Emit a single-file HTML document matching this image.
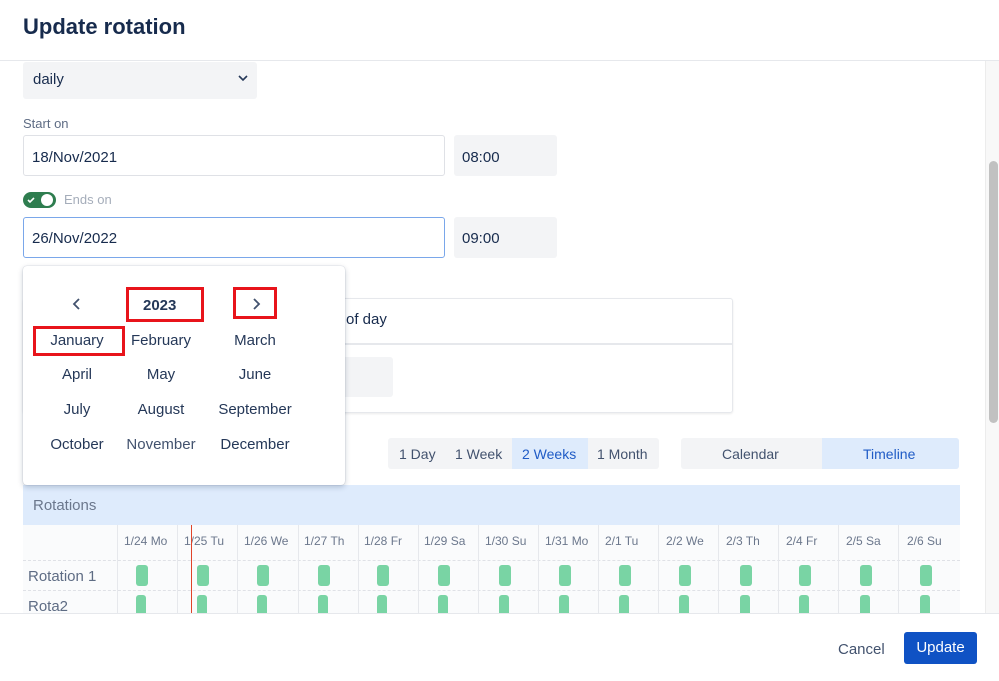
<!DOCTYPE html>
<html><head><meta charset="utf-8"><style>
*{box-sizing:border-box;margin:0;padding:0}
body{width:999px;height:681px;overflow:hidden;background:#fff;font-family:"Liberation Sans",sans-serif;color:#172b4d;position:relative}
.a{position:absolute}
.t{font-size:15px}
.hdr{font-size:12px;color:#6b778c}
.col{position:absolute;top:525px;height:88px;border-left:1.5px solid #e6e8ec}
.b1{position:absolute;top:565px;width:12px;height:21px;background:#79d4a4;border-radius:3px}
.b2{position:absolute;top:595px;width:10px;height:18px;background:#79d4a4;border-radius:3px 3px 0 0}
.m{position:absolute;font-size:15px;color:#253858;text-align:center;width:90px}
.red{position:absolute;border:3px solid #e8141b}
</style></head><body>
<div class="a" style="left:23px;top:14px;font-size:22px;font-weight:bold;color:#172b4d">Update rotation</div>
<div class="a" style="left:0;top:60px;width:999px;height:1px;background:#e6e8ec"></div>

<div class="a" style="left:23px;top:62px;width:234px;height:37px;background:#f3f4f6;border-radius:3px"></div>
<div class="a t" style="left:33px;top:71px">daily</div>
<svg class="a" style="left:237px;top:73px" width="12" height="10"><path d="M2 3l4 4 4-4" stroke="#253858" stroke-width="1.6" fill="none"/></svg>

<div class="a" style="left:23px;top:116px;font-size:13px;color:#5e6c84">Start on</div>
<div class="a" style="left:23px;top:135px;width:422px;height:41px;border:1.5px solid #dfe1e6;border-radius:3px"></div>
<div class="a t" style="left:32px;top:149px">18/Nov/2021</div>
<div class="a" style="left:454px;top:135px;width:103px;height:41px;background:#f3f4f6;border-radius:3px"></div>
<div class="a t" style="left:462px;top:149px">08:00</div>

<div class="a" style="left:23px;top:192px;width:33px;height:16px;background:#2e7d4f;border-radius:8px"></div>
<div class="a" style="left:41px;top:194px;width:12px;height:12px;background:#fff;border-radius:6px"></div>
<svg class="a" style="left:26px;top:195px" width="10" height="10"><path d="M2 5l2 2 4-4" stroke="#fff" stroke-width="1.6" fill="none"/></svg>
<div class="a" style="left:64px;top:192px;font-size:13px;color:#a5adba">Ends on</div>
<div class="a" style="left:23px;top:217px;width:422px;height:41px;border:1.5px solid #7aa7ea;border-radius:3px"></div>
<div class="a t" style="left:32px;top:230px">26/Nov/2022</div>
<div class="a" style="left:454px;top:217px;width:103px;height:41px;background:#f3f4f6;border-radius:3px"></div>
<div class="a t" style="left:462px;top:230px">09:00</div>

<div class="a" style="left:23px;top:298px;width:710px;height:115px;border:1.5px solid #e6e8ec;border-radius:3px;box-shadow:0 1px 2px rgba(0,0,0,.08)"></div>
<div class="a" style="left:23px;top:343px;width:710px;height:1.5px;background:#e6e8ec"></div>
<div class="a t" style="left:346px;top:311px">of day</div>
<div class="a" style="left:300px;top:357px;width:93px;height:40px;background:#f3f4f6;border-radius:3px"></div>

<div class="a" style="left:388px;top:438px;width:271px;height:31px;background:#f3f4f6;border-radius:3px"></div>
<div class="a" style="left:512px;top:438px;width:76px;height:31px;background:#deebfc"></div>
<div class="a" style="left:399px;top:446px;font-size:14px;color:#42526e">1 Day</div>
<div class="a" style="left:455px;top:446px;font-size:14px;color:#42526e">1 Week</div>
<div class="a" style="left:522px;top:446px;font-size:14px;color:#1f5bc6">2 Weeks</div>
<div class="a" style="left:597px;top:446px;font-size:14px;color:#42526e">1 Month</div>
<div class="a" style="left:681px;top:438px;width:278px;height:31px;background:#f3f4f6;border-radius:3px"></div>
<div class="a" style="left:822px;top:438px;width:137px;height:31px;background:#deebfc;border-radius:0 3px 3px 0"></div>
<div class="a" style="left:722px;top:446px;font-size:14px;color:#42526e">Calendar</div>
<div class="a" style="left:863px;top:446px;font-size:14px;color:#1f5bc6">Timeline</div>

<div class="a" style="left:23px;top:485px;width:937px;height:40px;background:#deebfc"></div>
<div class="a" style="left:33px;top:497px;font-size:15px;color:#6b778c">Rotations</div>
<div class="a" style="left:23px;top:525px;width:937px;height:88px;background:#fafbfc"></div>
<div class="a" style="left:23px;top:560px;width:937px;border-top:1px dashed #dfe1e6"></div>
<div class="a" style="left:23px;top:590px;width:937px;border-top:1px dashed #dfe1e6"></div>
<div class="a" style="left:28px;top:568px;font-size:15px;color:#5e6c84">Rotation 1</div>
<div class="a" style="left:28px;top:598px;font-size:15px;color:#5e6c84">Rota2</div>

<div class="col" style="left:117px"></div><div class="a hdr" style="left:124px;top:534px">1/24 Mo</div><div class="b1" style="left:136px"></div><div class="b2" style="left:136px"></div>
<div class="col" style="left:177px"></div><div class="a hdr" style="left:184px;top:534px">1/25 Tu</div><div class="b1" style="left:197px"></div><div class="b2" style="left:197px"></div>
<div class="col" style="left:237px"></div><div class="a hdr" style="left:244px;top:534px">1/26 We</div><div class="b1" style="left:257px"></div><div class="b2" style="left:257px"></div>
<div class="col" style="left:298px"></div><div class="a hdr" style="left:304px;top:534px">1/27 Th</div><div class="b1" style="left:318px"></div><div class="b2" style="left:318px"></div>
<div class="col" style="left:358px"></div><div class="a hdr" style="left:364px;top:534px">1/28 Fr</div><div class="b1" style="left:377px"></div><div class="b2" style="left:377px"></div>
<div class="col" style="left:418px"></div><div class="a hdr" style="left:424px;top:534px">1/29 Sa</div><div class="b1" style="left:438px"></div><div class="b2" style="left:438px"></div>
<div class="col" style="left:478px"></div><div class="a hdr" style="left:485px;top:534px">1/30 Su</div><div class="b1" style="left:499px"></div><div class="b2" style="left:499px"></div>
<div class="col" style="left:538px"></div><div class="a hdr" style="left:545px;top:534px">1/31 Mo</div><div class="b1" style="left:559px"></div><div class="b2" style="left:559px"></div>
<div class="col" style="left:598px"></div><div class="a hdr" style="left:605px;top:534px">2/1 Tu</div><div class="b1" style="left:619px"></div><div class="b2" style="left:619px"></div>
<div class="col" style="left:658px"></div><div class="a hdr" style="left:666px;top:534px">2/2 We</div><div class="b1" style="left:679px"></div><div class="b2" style="left:679px"></div>
<div class="col" style="left:718px"></div><div class="a hdr" style="left:726px;top:534px">2/3 Th</div><div class="b1" style="left:740px"></div><div class="b2" style="left:740px"></div>
<div class="col" style="left:778px"></div><div class="a hdr" style="left:786px;top:534px">2/4 Fr</div><div class="b1" style="left:799px"></div><div class="b2" style="left:799px"></div>
<div class="col" style="left:838px"></div><div class="a hdr" style="left:846px;top:534px">2/5 Sa</div><div class="b1" style="left:860px"></div><div class="b2" style="left:860px"></div>
<div class="col" style="left:898px"></div><div class="a hdr" style="left:907px;top:534px">2/6 Su</div><div class="b1" style="left:920px"></div><div class="b2" style="left:920px"></div>
<div class="a" style="left:190.5px;top:525px;width:1.5px;height:88px;background:#e0442a"></div>

<div class="a" style="left:23px;top:266px;width:322px;height:219px;background:#fff;border-radius:4px;box-shadow:0 2px 6px rgba(9,30,66,.22),0 0 1px rgba(9,30,66,.3)"></div>
<svg class="a" style="left:71px;top:297px" width="12" height="14"><path d="M8 2L3 7l5 5" stroke="#42526e" stroke-width="1.8" fill="none"/></svg>
<div class="a" style="left:143px;top:297px;font-size:15px;font-weight:bold;color:#253858">2023</div>
<svg class="a" style="left:250px;top:297px" width="12" height="14"><path d="M4 2l5 5-5 5" stroke="#42526e" stroke-width="1.8" fill="none"/></svg>
<div class="red" style="left:126px;top:287px;width:78px;height:35px"></div>
<div class="red" style="left:233px;top:287px;width:44px;height:32px"></div>
<div class="red" style="left:33px;top:326px;width:92px;height:30px"></div>
<div class="m" style="left:32px;top:332px">January</div>
<div class="m" style="left:116px;top:332px">February</div>
<div class="m" style="left:210px;top:332px">March</div>
<div class="m" style="left:32px;top:366px">April</div>
<div class="m" style="left:116px;top:366px">May</div>
<div class="m" style="left:210px;top:366px">June</div>
<div class="m" style="left:32px;top:401px">July</div>
<div class="m" style="left:116px;top:401px">August</div>
<div class="m" style="left:200px;top:401px;width:110px">September</div>
<div class="m" style="left:32px;top:436px">October</div>
<div class="m" style="left:111px;top:436px;width:100px;color:#42526e">November</div>
<div class="m" style="left:205px;top:436px;width:100px">December</div>

<div class="a" style="left:985px;top:61px;width:14px;height:552px;background:#f8f8f8;border-left:1px solid #ececec"></div>
<div class="a" style="left:989px;top:161px;width:9px;height:262px;background:#c1c1c1;border-radius:5px"></div>

<div class="a" style="left:0;top:613px;width:999px;height:68px;background:#fff;border-top:1px solid #e6e8ec"></div>
<div class="a" style="left:838px;top:641px;font-size:15px;color:#42526e">Cancel</div>
<div class="a" style="left:904px;top:632px;width:73px;height:32px;background:#0f52c4;border-radius:3px;color:#fff;font-size:15px;text-align:center;line-height:31px">Update</div>
</body></html>
